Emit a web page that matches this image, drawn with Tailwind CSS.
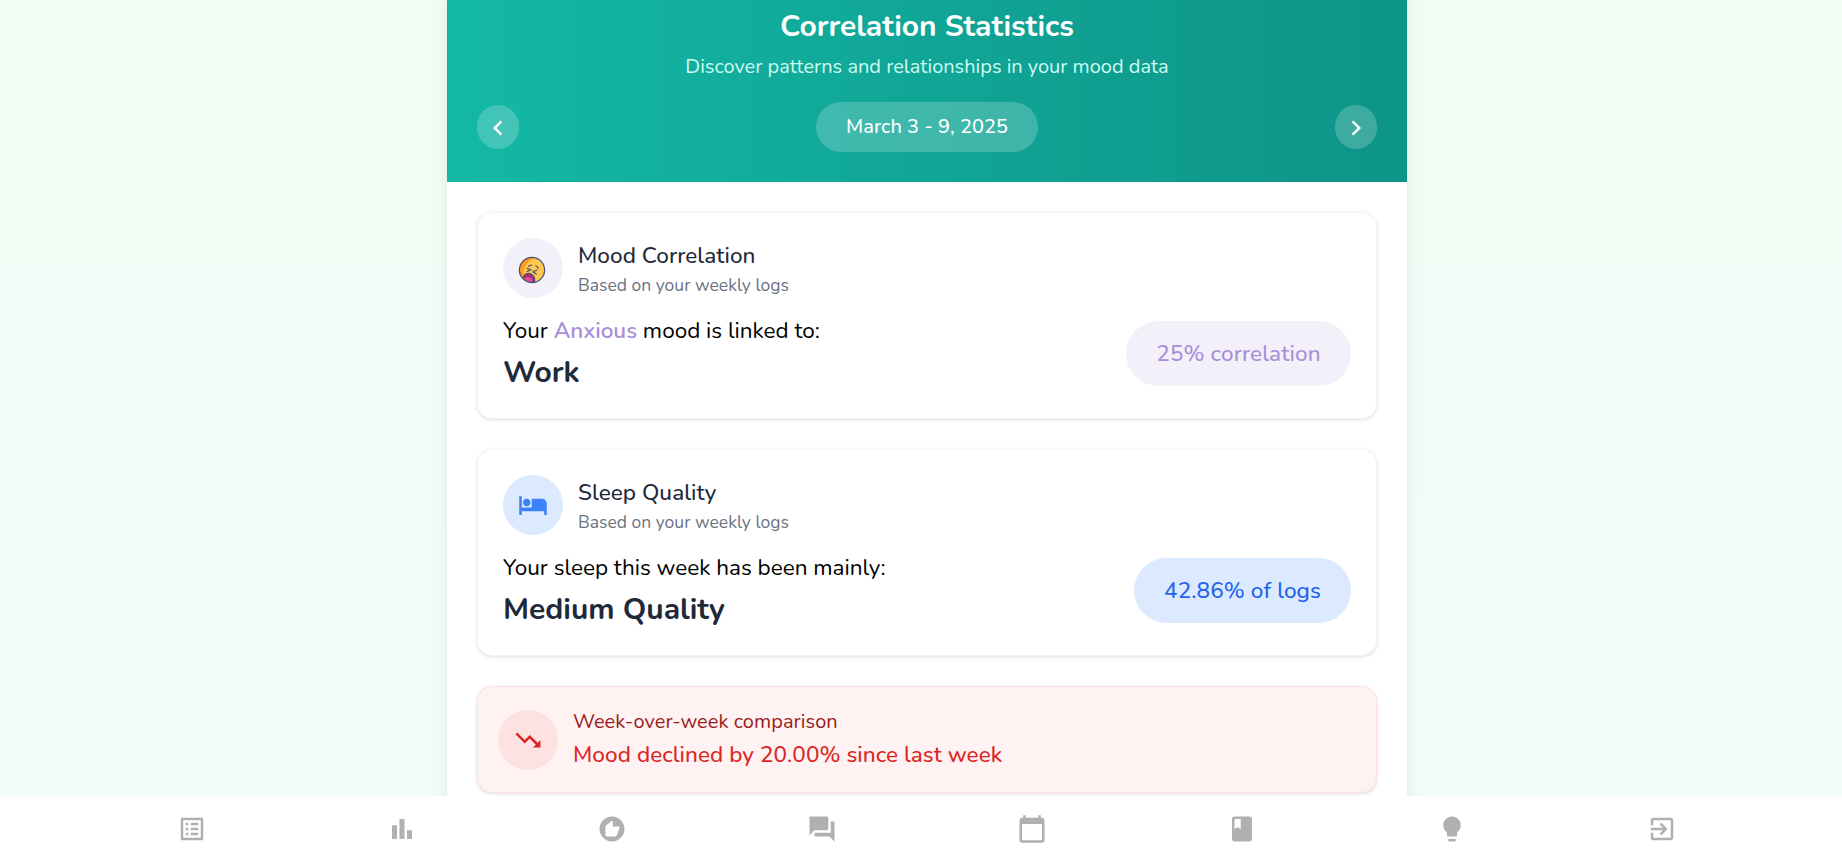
<!DOCTYPE html>
<html lang="en">
<head>
<meta charset="utf-8">
<title>Correlation Statistics</title>
<script src="https://cdn.jsdelivr.net/npm/@tailwindcss/browser@4"></script>
</head>
<body class="h-[862px] overflow-hidden font-['Nunito','Lato',sans-serif] text-black">
<div class="flex h-[862px] w-[1854px] flex-col overflow-hidden bg-linear-to-b from-[#f0fdf4] to-[#f0fdfa]">
  <div class="min-h-0 flex-1 overflow-hidden">
    <main class="mx-auto -mt-[23px] h-[1100px] w-[960px] bg-white shadow-[0_12px_19px_-4px_rgba(0,0,0,0.1),0_5px_8px_-5px_rgba(0,0,0,0.1)]">
      <header class="h-[205px] bg-linear-to-r from-[#14b8a6] to-[#0d9488] px-[30px] pt-[30px] text-white">
        <h1 class="text-center text-[30px] leading-[40px] font-bold">Correlation Statistics</h1>
        <p class="mt-[5px] text-center text-[20px] leading-[30px] text-[#ccfbf1]">Discover patterns and relationships in your mood data</p>
        <div class="mt-5 flex items-center justify-between">
          <button class="flex h-11 w-[42px] items-center justify-center rounded-full bg-white/20" aria-label="Previous week">
            <svg class="mt-0.5 size-[30px]" viewBox="0 0 24 24" fill="currentColor"><path d="M15.41 7.41 14 6l-6 6 6 6 1.41-1.41L10.83 12z"/></svg>
          </button>
          <div class="rounded-full bg-white/20 px-[30px] py-[10px] text-[20px] leading-[30px] font-medium">March 3 - 9, 2025</div>
          <button class="flex h-11 w-[42px] items-center justify-center rounded-full bg-white/20" aria-label="Next week">
            <svg class="mt-0.5 size-[30px]" viewBox="0 0 24 24" fill="currentColor"><path d="M10 6 8.59 7.41 13.17 12l-4.58 4.59L10 18l6-6z"/></svg>
          </button>
        </div>
      </header>

      <div class="flex flex-col gap-[30px] p-[30px]">
        <section class="rounded-[15px] border border-gray-100 bg-white p-[25px] shadow-[0_1px_4px_rgba(0,0,0,0.1),0_1px_2px_-1px_rgba(0,0,0,0.1)]">
          <div class="flex items-center gap-[15px]">
            <div class="flex size-[60px] items-center justify-center rounded-full bg-[#f3f0fa]">
              <svg class="mt-[3px] mr-[3px] size-7" viewBox="0 0 28 28">
                <circle cx="14" cy="14" r="12.6" fill="#fcc850"/>
                <path d="M17 1.6A12.6 12.6 0 0 0 5.5 23.2C4 13 8 5.5 17 1.6z" fill="#ff9a1a"/>
                <path d="M5.200 21.500C6 18.200 9.200 16.700 12.500 17.700c3.200 1 4.900 4.300 3.900 8.200-4.200 1-8.700-.9-11.200-4.400z" fill="#a3326f"/>
                <path d="M6.800 22.600c2.800-2.800 6.800-1.600 8.200 3.200-3.200.3-6.200-.9-8.200-3.200z" fill="#e54aa5"/>
                <path d="M5.200 21.500C6 18.200 9.200 16.700 12.500 17.700c3.200 1 4.900 4.300 3.900 8.200M10.500 10.200c1.200-.1 2.300-.4 3.100-1.300M9 12.300l3.800 1.500-3.700 1.700M18.600 14.200l-3.700 1.600 3.300 2.300M17.800 9.800c1.300.4 2.100 1.300 2.300 2.700" fill="none" stroke="#414b74" stroke-width="1.2" stroke-linecap="round" stroke-linejoin="round"/>
                <circle cx="14" cy="14" r="12.6" fill="none" stroke="#465078" stroke-width="1.2"/>
              </svg>
            </div>
            <div>
              <h2 class="text-[22.5px] leading-[35px] font-medium tracking-[0.05px] text-gray-800">Mood Correlation</h2>
              <p class="text-[17.5px] leading-[25px] text-gray-500">Based on your weekly logs</p>
            </div>
          </div>
          <div class="mt-[15px] flex items-center justify-between">
            <div>
              <p class="text-[22.5px] leading-[35px]">Your <span class="font-semibold text-[#a78fd8]">Anxious</span> mood is linked to:</p>
              <p class="mt-[5px] text-[30px] leading-[40px] font-bold text-gray-800">Work</p>
            </div>
            <div class="w-[225px] rounded-full bg-[#f3f0fa] py-[15px] text-center text-[22.5px] leading-[35px] font-medium tracking-[0.1px] text-[#a78fd8]">25% correlation</div>
          </div>
        </section>

        <section class="rounded-[15px] border border-gray-100 bg-white p-[25px] shadow-[0_1px_4px_rgba(0,0,0,0.1),0_1px_2px_-1px_rgba(0,0,0,0.1)]">
          <div class="flex items-center gap-[15px]">
            <div class="flex size-[60px] items-center justify-center rounded-full bg-[#dbeafe] text-[#3b82f6]">
              <svg class="size-[30px]" viewBox="0 0 24 24" fill="currentColor"><path d="M7 13c1.660 0 3-1.340 3-3S8.660 7 7 7s-3 1.340-3 3 1.340 3 3 3zm12-6h-8v7H3V5H1v15h2v-3h18v3h2v-9c0-2.210-1.790-4-4-4z"/></svg>
            </div>
            <div>
              <h2 class="text-[22.5px] leading-[35px] font-medium tracking-[0.05px] text-gray-800">Sleep Quality</h2>
              <p class="text-[17.5px] leading-[25px] text-gray-500">Based on your weekly logs</p>
            </div>
          </div>
          <div class="mt-[15px] flex items-center justify-between">
            <div>
              <p class="text-[22.5px] leading-[35px]">Your sleep this week has been mainly:</p>
              <p class="mt-[5px] text-[30px] leading-[40px] font-bold text-gray-800">Medium Quality</p>
            </div>
            <div class="w-[217px] rounded-full bg-[#dbeafe] py-[15px] text-center text-[22.5px] leading-[35px] font-medium tracking-[0.1px] text-[#2563eb]">42.86% of logs</div>
          </div>
        </section>

        <section class="flex items-center gap-[15px] rounded-[15px] border border-[#fee2e2] bg-[#fef2f2] p-[20px] shadow-[0_1px_4px_rgba(0,0,0,0.1),0_1px_2px_-1px_rgba(0,0,0,0.1)]">
          <div class="flex size-[60px] items-center justify-center rounded-full bg-[#fee2e2] text-[#dc2626]">
            <svg class="size-[30px]" viewBox="0 0 24 24" fill="currentColor"><path d="m16 18 2.290-2.290-4.880-4.880-4 4L2 7.410 3.410 6l6 6 4-4 6.300 6.290L22 12v6z"/></svg>
          </div>
          <div>
            <p class="text-[20px] leading-[30px] tracking-[0.05px] text-[#991b1b]">Week-over-week comparison</p>
            <p class="text-[22.5px] leading-[35px] font-medium tracking-[0.06px] text-[#dc2626]">Mood declined by 20.00% since last week</p>
          </div>
        </section>
      </div>
    </main>
  </div>

  <nav class="flex h-[66px] shrink-0 items-center justify-center bg-white text-[#b0b0b0]">
    <a class="flex w-[210px] justify-center"><svg class="size-[30px]" viewBox="0 0 24 24" fill="currentColor"><path d="M19 5v14H5V5h14m1.100-2H3.900c-.5 0-.9.400-.9.900v16.200c0 .4.400.9.900.9h16.200c.4 0 .9-.5.9-.9V3.900c0-.5-.5-.9-.9-.9zM11 7h6v2h-6V7zm0 4h6v2h-6v-2zm0 4h6v2h-6zM7 7h2v2H7zm0 4h2v2H7zm0 4h2v2H7z"/></svg></a>
    <a class="flex w-[210px] justify-center"><svg class="size-[30px]" viewBox="0 0 24 24" fill="currentColor"><path d="M4 9h4v11H4zM16 13h4v7h-4zM10 4h4v16h-4z"/></svg></a>
    <a class="flex w-[210px] justify-center"><svg class="size-[30px]" viewBox="0 0 24 24" fill="currentColor"><path d="M12 2C6.480 2 2 6.480 2 12s4.480 10 10 10 10-4.480 10-10S17.520 2 12 2zm6 9.100c0 .2-.1.500-.2.700l-2.100 5.300c-.2.600-.7.900-1.300.9H8.300c-.9 0-1.600-.7-1.600-1.600v-6c0-.4.200-.9.500-1.200L12 5.300l.4.400c.2.200.3.500.3.700v.2L12.600 10H17c.6 0 1 .5 1 1.100z"/></svg></a>
    <a class="flex w-[210px] justify-center"><svg class="size-[30px]" viewBox="0 0 24 24" fill="currentColor"><path d="M21 6h-2v9H6v2c0 .55.45 1 1 1h11l4 4V7c0-.55-.45-1-1-1zm-4 6V3c0-.55-.45-1-1-1H3c-.55 0-1 .45-1 1v14l4-4h10c.55 0 1-.45 1-1z"/></svg></a>
    <a class="flex w-[210px] justify-center"><svg class="size-[30px]" viewBox="0 0 24 24" fill="currentColor"><path d="M20 3h-1V1h-2v2H7V1H5v2H4c-1.100 0-2 .9-2 2v16c0 1.100.9 2 2 2h16c1.100 0 2-.9 2-2V5c0-1.100-.9-2-2-2zm0 18H4V8h16v13z"/></svg></a>
    <a class="flex w-[210px] justify-center"><svg class="size-[30px]" viewBox="0 0 24 24" fill="currentColor"><path d="M18 2H6c-1.100 0-2 .9-2 2v16c0 1.100.9 2 2 2h12c1.100 0 2-.9 2-2V4c0-1.100-.9-2-2-2zM6 4h5v8l-2.500-1.500L6 12V4z"/></svg></a>
    <a class="flex w-[210px] justify-center"><svg class="size-[30px]" viewBox="0 0 24 24" fill="currentColor"><path d="M9 21c0 .55.45 1 1 1h4c.55 0 1-.45 1-1v-1H9v1zm3-19C8.140 2 5 5.140 5 9c0 2.380 1.190 4.470 3 5.740V17c0 .55.45 1 1 1h6c.55 0 1-.45 1-1v-2.260c1.810-1.270 3-3.360 3-5.740 0-3.860-3.140-7-7-7z"/></svg></a>
    <a class="flex w-[210px] justify-center"><svg class="size-[30px]" viewBox="0 0 24 24" fill="currentColor"><path d="M10.090 15.590 11.500 17l5-5-5-5-1.410 1.410L12.670 11H3v2h9.670l-2.580 2.590zM19 3H5c-1.110 0-2 .9-2 2v4h2V5h14v14H5v-4H3v4c0 1.100.89 2 2 2h14c1.100 0 2-.9 2-2V5c0-1.100-.9-2-2-2z"/></svg></a>
  </nav>
</div>
</body>
</html>
